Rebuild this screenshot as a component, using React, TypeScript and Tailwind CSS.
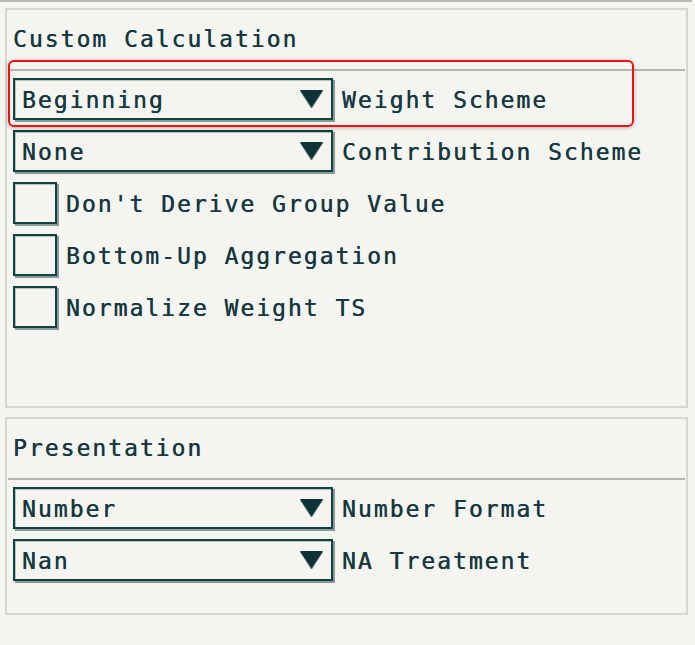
import React from 'react';

const font = { fontFamily: '"DejaVu Sans Mono", "Liberation Mono", monospace' };

function Caret() {
  return (
    <svg width="23" height="18" viewBox="0 0 23 18" className="shrink-0">
      <polygon points="0,0 23,0 11.5,18" fill="#5d7676" transform="translate(0,1)" />
      <polygon points="0,0 23,0 11.5,17" fill="#0f3236" />
    </svg>
  );
}

function Select({ value, label }: { value: string; label: string }) {
  return (
    <div className="flex items-center gap-[9px]">
      <div className="flex h-[42px] w-[320px] items-center justify-between border-2 border-[#124240] bg-[#f4f4f0] pl-[7px] pr-[8px] shadow-[2px_2px_0_#8a9898,inset_1px_1px_0_#b8c2c2]">
        <span className="pt-[2px]">{value}</span>
        <Caret />
      </div>
      <span className="pt-[2px]">{label}</span>
    </div>
  );
}

function Check({ label }: { label: string }) {
  return (
    <div className="flex items-center gap-[9px]">
      <div className="h-[42px] w-[44px] border-2 border-[#124240] bg-[#f4f4f0] shadow-[2px_2px_0_#8a9898,inset_1px_1px_0_#b8c2c2]" />
      <span className="pt-[2px]">{label}</span>
    </div>
  );
}

function Panel({ title, height, children }: { title: string; height: string; children: React.ReactNode }) {
  return (
    <div className={`ml-[5px] w-[683px] border-2 border-[#d5d5d3] bg-[#f4f4f0] ${height}`}>
      <div className="px-[6px] pt-[15px] leading-[28px]">{title}</div>
      <div className="mx-[1px] mt-[16px] h-[2px] bg-[#b5b5b3]" />
      <div className="flex flex-col gap-[10px] px-[6px] pt-[7px]">{children}</div>
    </div>
  );
}

export default function App() {
  return (
    <div
      className="relative h-[645px] w-[695px] overflow-hidden bg-[#f4f4f0] text-[23px] leading-[28px] tracking-[2px] text-[#163840] [text-shadow:0.35px_0_0_#163840]"
      style={font}
    >
      <div className="h-[2px] w-[692px] bg-[#b8b8b6]" />
      <div className="mt-[6px] flex flex-col gap-[9px]">
        <Panel title="Custom Calculation" height="h-[400px]">
          <Select value="Beginning" label="Weight Scheme" />
          <Select value="None" label="Contribution Scheme" />
          <Check label="Don't Derive Group Value" />
          <Check label="Bottom-Up Aggregation" />
          <Check label="Normalize Weight TS" />
        </Panel>
        <Panel title="Presentation" height="h-[198px]">
          <Select value="Number" label="Number Format" />
          <Select value="Nan" label="NA Treatment" />
        </Panel>
      </div>
      {/* highlight annotation */}
      <div className="pointer-events-none absolute left-[8px] top-[60px] h-[67px] w-[626px] rounded-[6px] border-2 border-[#f01010] shadow-[0_1px_4px_rgba(0,0,0,0.25)]" />
    </div>
  );
}
